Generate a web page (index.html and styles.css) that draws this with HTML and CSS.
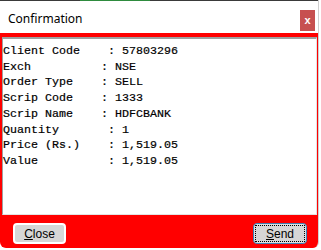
FILE: index.html
```html
<!DOCTYPE html>
<html lang="en">
<head>
  <meta charset="UTF-8" />
  <title>Confirmation</title>
  <link rel="stylesheet" href="styles.css">
</head>
<body>
  <div class="window">
    <div class="topline"><span class="topline-green"></span></div>
    <div class="titlebar">
      <span class="title">Confirmation</span>
      <span class="close-x">x</span>
    </div>
    <div class="body">
      <pre class="details">Client Code    : 57803296
Exch          : NSE
Order Type    : SELL
Scrip Code    : 1333
Scrip Name    : HDFCBANK
Quantity       : 1
Price (Rs.)    : 1,519.05
Value          : 1,519.05</pre>
      <div class="actions">
        <button class="btn"><u>C</u>lose</button>
        <button class="btn btn-default"><span class="focus"><u>S</u>end</span></button>
      </div>
    </div>
  </div>
</body>
</html>
```

FILE: styles.css
```css
body {
  margin: 0;
  background: #fff;
  font-family: "Liberation Sans", Arial, sans-serif;
}
.window {
  width: 318px;
  height: 248px;
  display: flex;
  flex-direction: column;
  border-right: 1px solid #d0d0d0;
  border-radius: 0 0 6px 6px;
  overflow: hidden;
}
.topline {
  height: 1px;
  background: #3a3a3a;
  display: flex;
}
.topline-green {
  width: 70px;
  margin-left: 80px;
  background: #2e8b3e;
}
.titlebar {
  height: 32px;
  background: #fff;
  display: flex;
  align-items: center;
  justify-content: space-between;
  padding: 0 3px 0 8px;
}
.title {
  font-family: "Noto Sans", "Open Sans", sans-serif;
  font-size: 12px;
  color: #000;
  margin-top: 2px;
}
.close-x {
  width: 15px;
  height: 21px;
  background: #c75050;
  color: #fff;
  font-size: 11px;
  font-weight: bold;
  display: flex;
  align-items: center;
  justify-content: center;
  margin-top: 6px;
}
.body {
  flex: 1;
  background: #ff0000;
  padding: 4px 1px 0 2px;
  display: flex;
  flex-direction: column;
}
.details {
  margin: 0;
  height: 170px;
  background: #fff;
  border-top: 2px solid #a0a0a0;
  border-left: 1px solid #a0a0a0;
  border-right: 1px solid #e3e3e3;
  border-bottom: 1px solid #e3e3e3;
  padding: 5px 0 0 0;
  font-family: "Liberation Mono", "Courier New", monospace;
  font-size: 11.67px;
  line-height: 15.7px;
  color: #000;
  -webkit-text-stroke: 0.2px #000;
}
.actions {
  display: flex;
  justify-content: space-between;
  padding: 8px 10px 0 11px;
}
.btn {
  width: 53px;
  height: 21px;
  padding: 0;
  background: #d6d6d6;
  border: 2px solid #fff;
  border-radius: 4px;
  font-family: "Liberation Sans", Arial, sans-serif;
  font-size: 12px;
  color: #000;
  display: flex;
  align-items: center;
  justify-content: center;
}
.btn-default {
  width: 54px;
  border: 1px solid #3c7fb1;
  padding: 1px;
  background: #e0e0e0;
}
.focus {
  flex: 1;
  align-self: stretch;
  display: flex;
  align-items: center;
  justify-content: center;
  border: 1px dotted #000;
  background: #d6d6d6;
}
```
